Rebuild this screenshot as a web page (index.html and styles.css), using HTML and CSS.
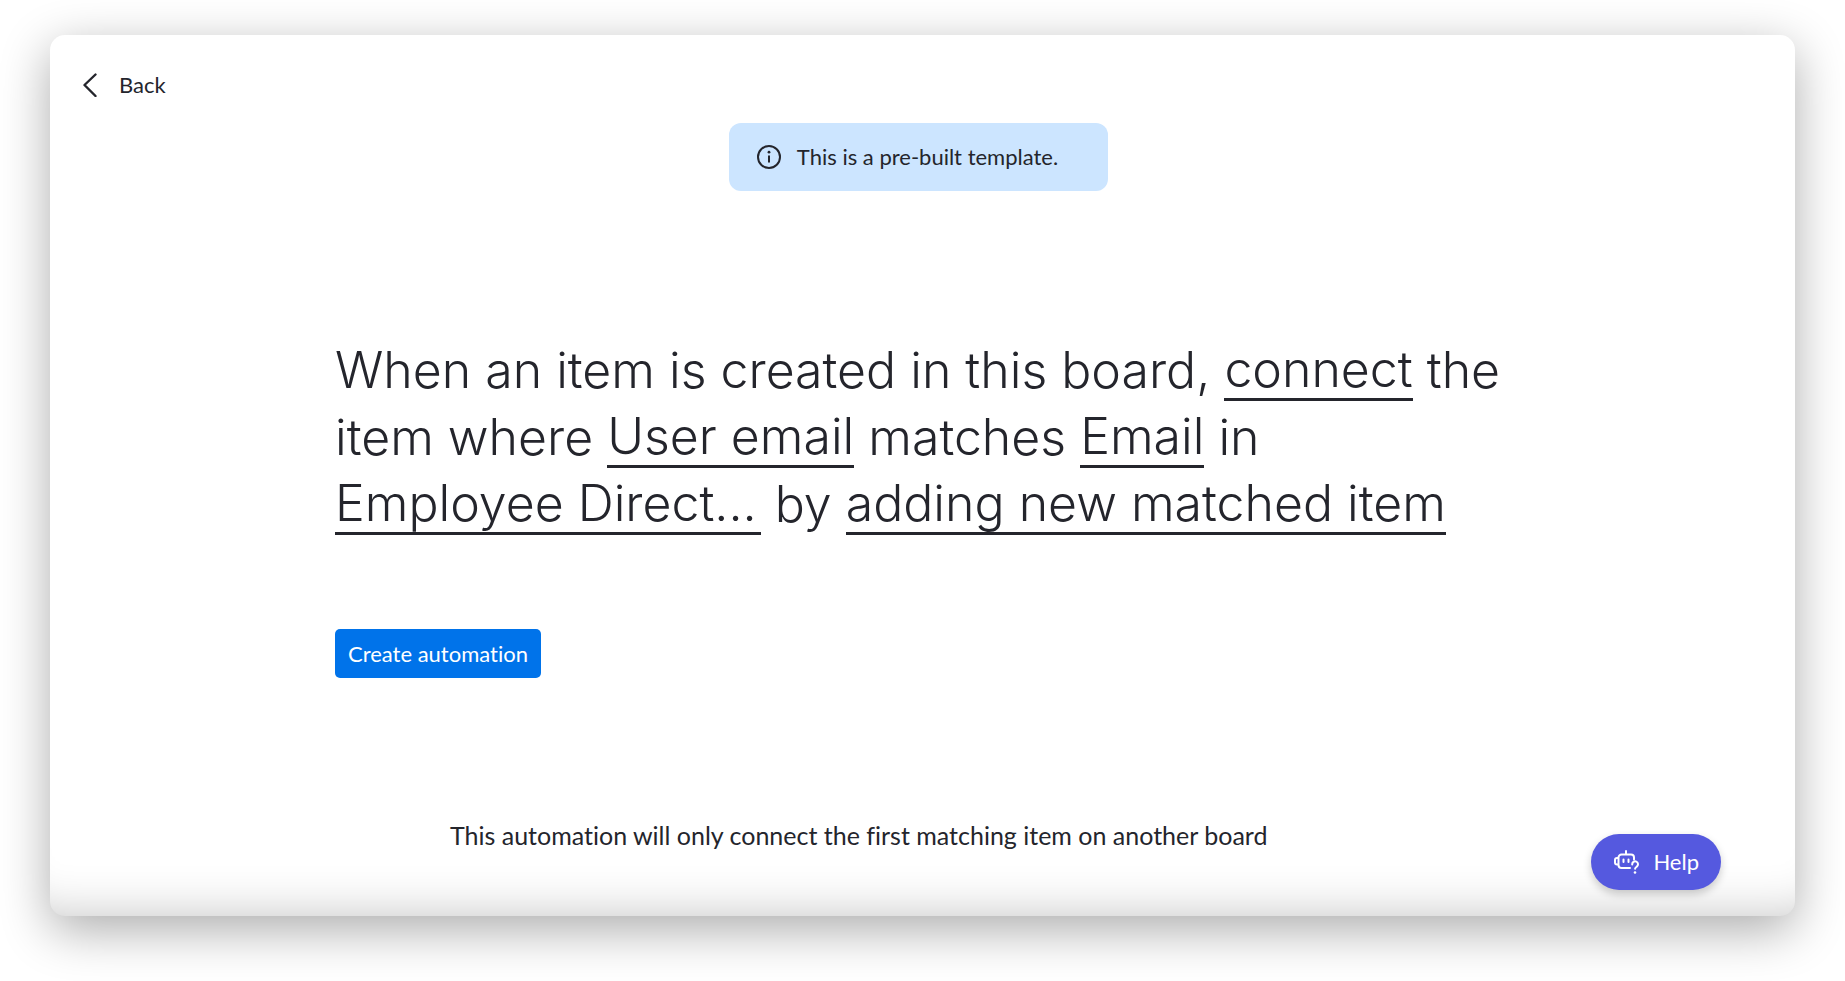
FILE: index.html
```
<!DOCTYPE html>
<html lang="en">
<head>
    <meta charset="UTF-8">
    <meta name="viewport" content="width=device-width, initial-scale=1.0">
    <title>Create automation</title>

    <link rel="stylesheet" href="styles.css">
</head>
<body>

    <main class="card">
        <button class="back" type="button">
            <svg width="14" height="24" viewBox="0 0 14 24" fill="none" stroke="currentColor" stroke-width="2.4" stroke-linecap="round" stroke-linejoin="round" aria-hidden="true">
                <path d="M12.5 1.5L1.5 12l11 11"/>
            </svg>
            Back
        </button>

        <div class="content">
            <div class="notice">
                <svg width="24" height="24" viewBox="0 0 24 24" fill="none" stroke="currentColor" stroke-width="2" aria-hidden="true">
                    <circle cx="12" cy="12" r="11"/>
                    <path d="M12 10.5v7"/>
                    <circle cx="12" cy="7.2" r="1.4" fill="currentColor" stroke="none"/>
                </svg>
                <span>This is a pre-built template.</span>
            </div>

            <p class="recipe">
                When an item is created in this board,
                <a class="recipe__field" href="#">connect</a>
                the item where
                <a class="recipe__field" href="#">User email</a>
                matches
                <a class="recipe__field" href="#">Email</a>
                in
                <a class="recipe__field recipe__field--board" href="#">Employee Direct...</a>
                by
                <a class="recipe__field" href="#">adding new matched item</a>
            </p>

            <button class="create" type="button">Create automation</button>

            <p class="hint">This automation will only connect the first matching item on another board</p>
        </div>

        <button class="help" type="button">
            <svg width="25" height="24" viewBox="0 0 25 24" fill="none" stroke="currentColor" stroke-width="2" stroke-linecap="round" stroke-linejoin="round" aria-hidden="true">
                <path d="M12 1v3"/>
                <path d="M20 9.500V7.500a3 3 0 0 0-3-3H7.500a3 3 0 0 0-3 3v7.500a3 3 0 0 0 3 3H16"/>
                <path d="M4 8H3a2 2 0 0 0-2 2v2.500a2 2 0 0 0 2 2h1"/>
                <path d="M9.500 9.500v2.500M14.500 9.500v2.500"/>
                <path d="M18.200 14.500a2.900 2.900 0 1 1 4.600 2.100c-1 .7-1.700 1.100-1.700 2.200"/>
                <circle cx="21" cy="22.500" r="1.300" fill="currentColor" stroke="none"/>
            </svg>
            Help
        </button>
    </main>

</body>
</html>
```
FILE: styles.css
```
* {
    box-sizing: border-box;
}

body {
    margin: 0;
    padding: 35px 50px 65px;
    background: #fff;
    color: #24252c;
    font-family: 'Lato', sans-serif;
    font-size: 22px;
    font-variant-ligatures: none;
    line-height: 28px;
}

button {
    border: none;
    font: inherit;
    font-variant-ligatures: none;
    cursor: pointer;
}

.card {
    position: relative;
    display: flex;
    flex-direction: column;
    min-height: calc(100vh - 100px);
    padding: 36px 33px 48px;
    border-radius: 15px;
    background: #fff;
    box-shadow: 0 14px 50px rgba(0, 0, 0, .33), inset 0 -50px 50px -50px rgba(0, 0, 0, .24);
}

.back {
    display: flex;
    align-items: center;
    align-self: flex-start;
    gap: 22px;
    padding: 0;
    background: none;
    color: inherit;
}

.content {
    display: flex;
    flex-direction: column;
    align-items: flex-start;
    width: 100%;
    max-width: 1175px;
    margin: 24px auto 0;
}

.notice {
    display: flex;
    align-items: center;
    align-self: center;
    gap: 16px;
    margin-right: 8px;
    padding: 20px 50px 20px 28px;
    border-radius: 12px;
    background: #cce5ff;
}

.recipe {
    margin: 146px 0 0;
    font-family: 'Inter', sans-serif;
    font-size: 50px;
    font-weight: 300;
    line-height: 67px;
}

.recipe__field {
    display: inline-block;
    height: 64px;
    border-bottom: 3px solid #24252c;
    color: inherit;
    line-height: 64px;
    text-decoration: none;
    vertical-align: top;
}

.recipe__field--board {
    padding-right: 4px;
}

.create {
    height: 49px;
    margin-top: 91px;
    padding: 0 13px;
    border-radius: 5px;
    background: #0073ea;
    color: #fff;
}

.hint {
    margin: 143px 0 0;
    padding-left: 115px;
    font-size: 25px;
}

.help {
    position: absolute;
    right: 74px;
    bottom: 26px;
    display: flex;
    align-items: center;
    gap: 14px;
    height: 56px;
    padding: 0 22px 0 23px;
    border-radius: 28px;
    background: #5559df;
    box-shadow: 0 4px 8px rgba(0, 0, 0, .2);
    color: #fff;
}
```
